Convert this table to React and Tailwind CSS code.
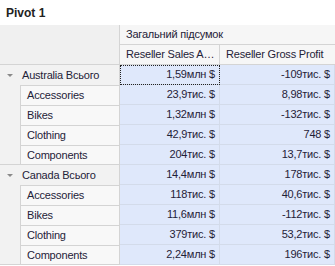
const groups = [
  {
    name: 'Australia Всього',
    total: ['1,59млн $', '-109тис. $'],
    rows: [
      ['Accessories', '23,9тис. $', '8,98тис. $'],
      ['Bikes', '1,32млн $', '-132тис. $'],
      ['Clothing', '42,9тис. $', '748 $'],
      ['Components', '204тис. $', '13,7тис. $'],
    ],
  },
  {
    name: 'Canada Всього',
    total: ['14,4млн $', '178тис. $'],
    rows: [
      ['Accessories', '118тис. $', '40,6тис. $'],
      ['Bikes', '11,6млн $', '-112тис. $'],
      ['Clothing', '379тис. $', '53,2тис. $'],
      ['Components', '2,24млн $', '196тис. $'],
    ],
  },
]

function Cell({ children, selected }) {
  return (
    <div
      className={`h-[20px] bg-[#dfe8fb] border-b border-r border-[#d3dbea] flex items-center justify-end pr-[4px] ${selected ? 'outline-1 outline-dotted outline-[#222] -outline-offset-1' : ''}`}
    >
      {children}
    </div>
  )
}

export default function App() {
  return (
    <div
      className="w-[335px] h-[266px] bg-white overflow-hidden text-[11px] tracking-[-0.2px] text-[#1f2238]"
      style={{ fontFamily: '"Liberation Sans", Arial, sans-serif' }}
    >
      <div className="h-[25px] flex items-center pl-[6px] font-bold text-[12px] tracking-normal text-[#222]">Pivot 1</div>

      <div className="grid grid-cols-[120px_100px_1fr] bg-[#f0f0f0]">
        <div className="row-span-2 border-b border-r border-[#d4d4d4] bg-[#f0f0f0]" />
        <div className="col-span-2 h-[20px] flex items-center pl-[6px] bg-[#f6f6f6] border-b border-[#d4d4d4]">Загальний підсумок</div>
        <div className="h-[20px] flex items-center pl-[6px] bg-[#f6f6f6] border-b border-r border-[#d4d4d4] whitespace-nowrap overflow-hidden">Reseller Sales A…</div>
        <div className="h-[20px] flex items-center pl-[6px] bg-[#f6f6f6] border-b border-[#d4d4d4] whitespace-nowrap overflow-hidden">Reseller Gross Profit</div>

        {groups.map((g, gi) => (
          <div key={g.name} className="contents">
            <div className="h-[20px] flex items-center bg-[#f2f2f2] border-r border-[#d4d4d4] whitespace-nowrap">
              <svg width="20" height="20" viewBox="0 0 20 20" className="shrink-0">
                <path d="M7 9h6l-3 3z" fill="#8a8a8a" />
              </svg>
              <span className="pl-[2px]">{g.name}</span>
            </div>
            <Cell selected={gi === 0}>{g.total[0]}</Cell>
            <Cell>{g.total[1]}</Cell>
            {g.rows.map((r, ri) => (
              <div key={r[0]} className="contents">
                <div className={`h-[20px] flex border-r border-[#d4d4d4] ${ri === g.rows.length - 1 ? 'border-b' : ''}`}>
                  <div className="w-[20px] bg-[#f2f2f2]" />
                  <div className="flex-1 flex items-center pl-[6px] bg-[#f8f8f8] border-l border-t border-[#d4d4d4]">{r[0]}</div>
                </div>
                <Cell>{r[1]}</Cell>
                <Cell>{r[2]}</Cell>
              </div>
            ))}
          </div>
        ))}
      </div>
    </div>
  )
}
